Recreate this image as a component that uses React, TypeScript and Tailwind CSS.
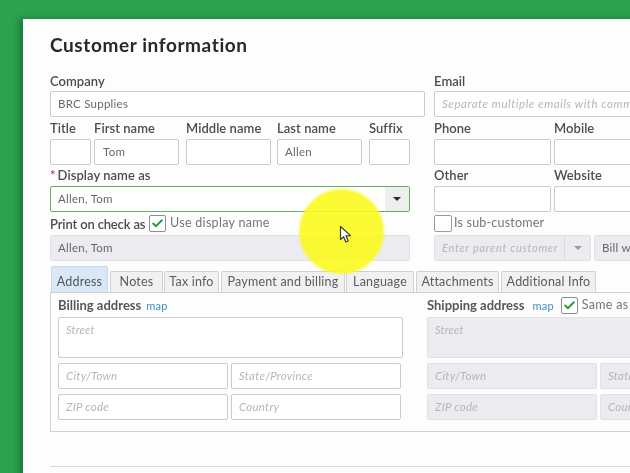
import { Check } from "lucide-react"
import type { ReactNode } from "react"

const font = "font-['Lato','Noto_Sans',sans-serif]"

function Label({ children, className = "" }: { children: ReactNode; className?: string }) {
  return <div className={`h-[22px] leading-[22px] text-[13px] font-semibold text-[#4b4d50] tracking-[0.05px] whitespace-nowrap ${className}`}>{children}</div>
}

function Field({ value, placeholder, disabled, className = "" }: { value?: string; placeholder?: string; disabled?: boolean; className?: string }) {
  return (
    <div className={`h-[26px] shrink-0 rounded-[2px] border pl-[7px] text-[11.5px] leading-[24px] tracking-[0.25px] whitespace-nowrap overflow-hidden ${disabled ? "bg-[#ebebf0] border-[#e0e0e5]" : "bg-white border-[#c9cbce]"} ${value ? "text-[#66686b]" : "italic text-[#b4b6ba]"} ${className}`}>
      {value ?? placeholder}
    </div>
  )
}

function Tick({ className = "" }: { className?: string }) {
  return (
    <span className={`flex h-[17px] w-[17px] shrink-0 items-center justify-center rounded-[2px] border border-[#8b8e92] bg-white ${className}`}>
      <Check className="h-[13px] w-[13px] text-[#2a9a3c]" strokeWidth={3.5} />
    </span>
  )
}

function Tab({ label, className = "" }: { label: string; className?: string }) {
  return (
    <div className={`flex h-[21px] shrink-0 items-center justify-center rounded-t-[2px] border border-b-0 border-[#cfd1d4] bg-[#f1f1f2] text-[12.5px] tracking-[0.2px] text-[#5a5c5f] ${className}`}>
      {label}
    </div>
  )
}

function AddressColumn({ disabled }: { disabled?: boolean }) {
  return (
    <div className="flex w-[345px] flex-col">
      <Field placeholder="Street" disabled={disabled} className="h-[41px]! w-[345px] leading-[24px]! text-[11px]" />
      <div className="mt-[5px] flex gap-[3px]">
        <Field placeholder="City/Town" disabled={disabled} className="w-[170px]" />
        <Field placeholder="State/Province" disabled={disabled} className="w-[170px]" />
      </div>
      <div className="mt-[5px] flex gap-[3px]">
        <Field placeholder="ZIP code" disabled={disabled} className="w-[170px]" />
        <Field placeholder="Country" disabled={disabled} className="w-[170px]" />
      </div>
    </div>
  )
}

export default function App() {
  return (
    <div className={`relative h-[473px] w-[630px] overflow-hidden bg-[#2ca24f] pl-[23px] pt-[19px] ${font}`}>
      <div className="h-[500px] w-[700px] bg-[#fdfdfd] pl-[27px] shadow-[-4px_0_6px_rgba(0,60,20,0.4)] blur-[0.4px]">
        <div className="h-[50px] pt-[16px]">
          <h1 className="text-[19px] leading-[20px] font-bold tracking-[0.6px] text-[#26282b]">Customer information</h1>
        </div>

        <div className="flex gap-[9px]">
          <div className="w-[375px] shrink-0">
            <Label className="leading-[24px]!">Company</Label>
            <Field value="BRC Supplies" className="w-[375px]" />

            <div className="flex">
              <div className="w-[41px]">
                <Label>Title</Label>
                <Field />
              </div>
              <div className="ml-[3px] w-[85px]">
                <Label>First name</Label>
                <Field value="Tom" className="pl-[8px]" />
              </div>
              <div className="ml-[7px] w-[85px]">
                <Label>Middle name</Label>
                <Field />
              </div>
              <div className="ml-[6px] w-[85px]">
                <Label>Last name</Label>
                <Field value="Allen" />
              </div>
              <div className="ml-[7px] w-[41px]">
                <Label>Suffix</Label>
                <Field />
              </div>
            </div>

            <Label className="flex h-[21px]! leading-[21px]!"><span className="mr-[2px] text-[#e03b30]">*</span>Display name as</Label>
            <div className="flex h-[26px] w-[360px] items-stretch rounded-[2px] border border-[#68ad5f] bg-white">
              <div className="flex-1 pl-[7px] text-[11.5px] leading-[24px] tracking-[0.25px] text-[#66686b]">Allen, Tom</div>
              <div className="flex w-[24px] items-center justify-center bg-[#eeeef1]">
                <span className="h-0 w-0 border-x-[4px] border-t-[4px] border-x-transparent border-t-[#26282b]" />
              </div>
            </div>

            <div className="flex h-[23px] items-center">
              <Label className="w-[99px] tracking-[-0.15px]!">Print on check as</Label>
              <Tick className="border-[#7f9f80] bg-[#eef1ee]" />
              <span className="ml-[4px] text-[12.5px] tracking-[0.3px] text-[#74767a]">Use display name</span>
            </div>
            <Field value="Allen, Tom" disabled className="w-[360px]" />
          </div>

          <div className="w-[300px] shrink-0">
            <Label className="leading-[24px]!">Email</Label>
            <Field placeholder="Separate multiple emails with commas" className="w-[260px] text-[11.5px] tracking-[0.55px]!" />

            <div className="flex gap-[3px]">
              <div className="w-[117px]">
                <Label>Phone</Label>
                <Field />
              </div>
              <div className="w-[117px]">
                <Label>Mobile</Label>
                <Field />
              </div>
            </div>

            <div className="flex gap-[3px]">
              <div className="w-[117px]">
                <Label className="h-[21px]! leading-[21px]!">Other</Label>
                <Field />
              </div>
              <div className="w-[117px]">
                <Label className="h-[21px]! leading-[21px]!">Website</Label>
                <Field />
              </div>
            </div>

            <div className="flex h-[23px] items-center">
              <span className="h-[17px] w-[18px] rounded-[2px] border border-[#9a9da0] bg-white" />
              <span className="ml-[2px] text-[12.5px] tracking-[0.2px] text-[#74767a]">Is sub-customer</span>
            </div>

            <div className="flex gap-[3px]">
              <div className="flex h-[26px] w-[157px] rounded-[2px] border border-[#e0e0e5] bg-[#ebebf0]">
                <div className="flex-1 overflow-hidden pl-[7px] text-[11px] leading-[24px] tracking-[0.7px] whitespace-nowrap text-[#b4b6ba] italic">Enter parent customer</div>
                <div className="flex w-[26px] shrink-0 items-center justify-center border-l border-[#d8d8dd]">
                  <span className="h-0 w-0 border-x-[4px] border-t-[4px] border-x-transparent border-t-[#9a9ca0]" />
                </div>
              </div>
              <Field value="Bill with parent" disabled className="w-[100px]" />
            </div>
          </div>
        </div>

        <div className="mt-[5px] flex items-end pl-px">
          <div className="flex h-[26px] w-[57px] shrink-0 items-center justify-center rounded-t-[2px] border border-b-0 border-[#c5d8ea] bg-[#d9e8f6] pt-[5px] text-[12.5px] tracking-[0.2px] text-[#55575a]">Address</div>
          <Tab label="Notes" className="ml-[2px] w-[53px]" />
          <Tab label="Tax info" className="ml-[1px] w-[55px]" />
          <Tab label="Payment and billing" className="ml-[2px] w-[124px]" />
          <Tab label="Language" className="ml-[1px] w-[68px]" />
          <Tab label="Attachments" className="ml-[2px] w-[83px]" />
          <Tab label="Additional Info" className="ml-[2px] w-[95px]" />
        </div>

        <div className="h-[140px] w-[640px] border border-[#cfd1d4] pl-[7px]">
          <div className="flex">
            <div className="w-[369px] shrink-0">
              <div className="flex h-[24px] items-center pt-[2px]">
                <span className="text-[13px] font-bold text-[#55575a]">Billing address</span>
                <span className="ml-[5px] text-[11px] tracking-[0.2px] text-[#3d90c4]">map</span>
              </div>
              <AddressColumn />
            </div>
            <div className="w-[300px] shrink-0">
              <div className="flex h-[24px] items-center pt-[2px]">
                <span className="text-[13px] font-bold text-[#55575a]">Shipping address</span>
                <span className="ml-[8px] text-[11px] tracking-[0.2px] text-[#3d90c4]">map</span>
                <Tick className="ml-[7px] -translate-y-[1px]" />
                <span className="ml-[4px] -translate-y-[1px] text-[12.5px] tracking-[0.3px] whitespace-nowrap text-[#74767a]">Same as billing address</span>
              </div>
              <AddressColumn disabled />
            </div>
          </div>
        </div>

        <div className="mt-[34px] h-px w-[640px] bg-[#d9dadc]" />
      </div>

      {/* highlight round the mouse pointer */}
      <div className="absolute left-[299px] top-[189px] h-[85px] w-[85px] rounded-full bg-[#fbf91e]/90 blur-[0.8px]" />
      <svg className="absolute left-[339px] top-[225px]" width="13" height="19" viewBox="0 0 13 19">
        <path d="M1.5 1.5 L1.5 14.5 L4.6 11.8 L6.8 17 L9.2 16 L7 10.9 L11.5 10.6 Z" fill="#fff" stroke="#3a3a36" strokeWidth="1.2" strokeLinejoin="round" />
      </svg>
    </div>
  )
}
